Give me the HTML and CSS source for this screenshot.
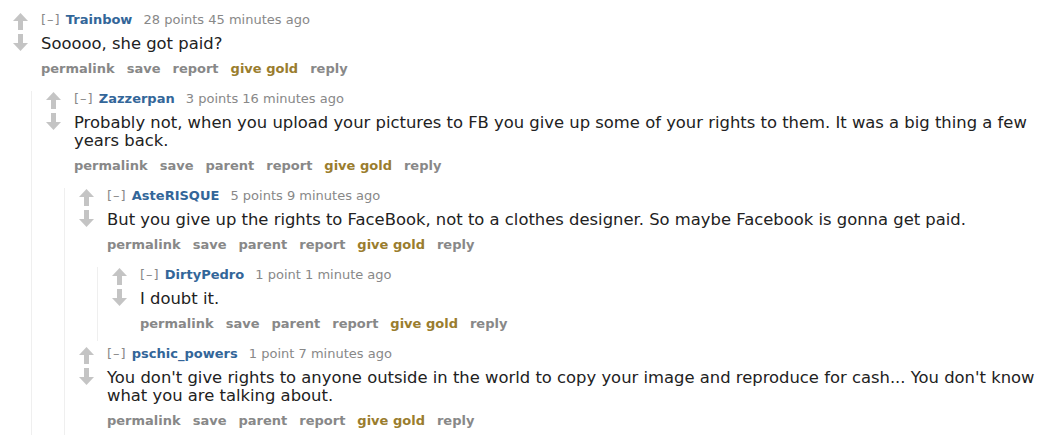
FILE: index.html
```html
<!DOCTYPE html>
<html>
<head>
<meta charset="utf-8">
<link rel="stylesheet" href="styles.css">
</head>
<body>
<div class="thread">
  <div class="comment">
    <div class="row">
      <div class="midcol">
        <svg class="arrow" viewBox="0 0 15 17" width="15" height="17"><path d="M7.5 0 L15 8 L10 8 L10 17 L5 17 L5 8 L0 8 Z"/></svg>
        <svg class="arrow" viewBox="0 0 15 17" width="15" height="17"><path d="M7.5 17 L15 9 L10 9 L10 0 L5 0 L5 9 L0 9 Z"/></svg>
      </div>
      <div class="entry">
        <p class="tagline"><span class="expand">[–]</span> <a class="author">Trainbow</a> <span class="score">28 points</span> 45 minutes ago</p>
        <div class="md">Sooooo, she got paid?</div>
        <ul class="buttons"><li>permalink</li><li>save</li><li>report</li><li class="gold">give gold</li><li>reply</li></ul>
      </div>
    </div>
    <div class="child">
      <div class="comment">
        <div class="row">
          <div class="midcol">
            <svg class="arrow" viewBox="0 0 15 17" width="15" height="17"><path d="M7.5 0 L15 8 L10 8 L10 17 L5 17 L5 8 L0 8 Z"/></svg>
            <svg class="arrow" viewBox="0 0 15 17" width="15" height="17"><path d="M7.5 17 L15 9 L10 9 L10 0 L5 0 L5 9 L0 9 Z"/></svg>
          </div>
          <div class="entry">
            <p class="tagline"><span class="expand">[–]</span> <a class="author">Zazzerpan</a> <span class="score">3 points</span> 16 minutes ago</p>
            <div class="md">Probably not, when you upload your pictures to FB you give up some of your rights to them. It was a big thing a few years back.</div>
            <ul class="buttons"><li>permalink</li><li>save</li><li>parent</li><li>report</li><li class="gold">give gold</li><li>reply</li></ul>
          </div>
        </div>
        <div class="child">
          <div class="comment">
            <div class="row">
              <div class="midcol">
                <svg class="arrow" viewBox="0 0 15 17" width="15" height="17"><path d="M7.5 0 L15 8 L10 8 L10 17 L5 17 L5 8 L0 8 Z"/></svg>
                <svg class="arrow" viewBox="0 0 15 17" width="15" height="17"><path d="M7.5 17 L15 9 L10 9 L10 0 L5 0 L5 9 L0 9 Z"/></svg>
              </div>
              <div class="entry">
                <p class="tagline"><span class="expand">[–]</span> <a class="author">AsteRISQUE</a> <span class="score">5 points</span> 9 minutes ago</p>
                <div class="md">But you give up the rights to FaceBook, not to a clothes designer. So maybe Facebook is gonna get paid.</div>
                <ul class="buttons"><li>permalink</li><li>save</li><li>parent</li><li>report</li><li class="gold">give gold</li><li>reply</li></ul>
              </div>
            </div>
            <div class="child">
              <div class="comment">
                <div class="row">
                  <div class="midcol">
                    <svg class="arrow" viewBox="0 0 15 17" width="15" height="17"><path d="M7.5 0 L15 8 L10 8 L10 17 L5 17 L5 8 L0 8 Z"/></svg>
                    <svg class="arrow" viewBox="0 0 15 17" width="15" height="17"><path d="M7.5 17 L15 9 L10 9 L10 0 L5 0 L5 9 L0 9 Z"/></svg>
                  </div>
                  <div class="entry">
                    <p class="tagline"><span class="expand">[–]</span> <a class="author">DirtyPedro</a> <span class="score">1 point</span> 1 minute ago</p>
                    <div class="md">I doubt it.</div>
                    <ul class="buttons"><li>permalink</li><li>save</li><li>parent</li><li>report</li><li class="gold">give gold</li><li>reply</li></ul>
                  </div>
                </div>
              </div>
            </div>
          </div>
          <div class="comment">
            <div class="row">
              <div class="midcol">
                <svg class="arrow" viewBox="0 0 15 17" width="15" height="17"><path d="M7.5 0 L15 8 L10 8 L10 17 L5 17 L5 8 L0 8 Z"/></svg>
                <svg class="arrow" viewBox="0 0 15 17" width="15" height="17"><path d="M7.5 17 L15 9 L10 9 L10 0 L5 0 L5 9 L0 9 Z"/></svg>
              </div>
              <div class="entry">
                <p class="tagline"><span class="expand">[–]</span> <a class="author">pschic_powers</a> <span class="score">1 point</span> 7 minutes ago</p>
                <div class="md">You don't give rights to anyone outside in the world to copy your image and reproduce for cash... You don't know what you are talking about.</div>
                <ul class="buttons"><li>permalink</li><li>save</li><li>parent</li><li>report</li><li class="gold">give gold</li><li>reply</li></ul>
              </div>
            </div>
          </div>
        </div>
      </div>
    </div>
  </div>
</div>
</body>
</html>
```

FILE: styles.css
```css
html, body {
  margin: 0;
  padding: 0;
  background: #ffffff;
}

body {
  font-family: "DejaVu Sans", Verdana, sans-serif;
  color: #222222;
}

.thread {
  padding: 12px 4px 0 0;
}

.comment {
  display: flex;
  flex-direction: column;
}

.row {
  display: flex;
  padding-left: 13px;
  gap: 13px;
}

.midcol {
  flex: 0 0 15px;
  display: flex;
  flex-direction: column;
  gap: 4px;
  padding-top: 1px;
}

.arrow {
  display: block;
}

.arrow path {
  fill: #c4c4c4;
}

.entry {
  flex: 1;
  min-width: 0;
  padding-bottom: 10px;
}

.tagline {
  margin: 0;
  font-size: 13px;
  line-height: 16px;
  color: #888888;
  white-space: nowrap;
}

.expand {
  color: #888888;
  letter-spacing: 1px;
  margin-right: 1px;
}

.author {
  color: #369;
  font-weight: bold;
  margin-right: 7px;
}

.md {
  margin-top: 7px;
  font-size: 16.4px;
  line-height: 18px;
  color: #222222;
}

.buttons {
  list-style: none;
  margin: 0;
  padding: 8px 0 0 0;
  display: flex;
  gap: 12px;
  font-size: 13px;
  line-height: 15px;
  font-weight: bold;
  color: #888888;
}

.buttons .gold {
  color: #9a7d2e;
}

.child {
  margin-left: 31px;
  margin-top: 5px;
  border-left: 1px solid #efefef;
  padding-left: 1px;
  display: flex;
  flex-direction: column;
  gap: 5px;
}
```
